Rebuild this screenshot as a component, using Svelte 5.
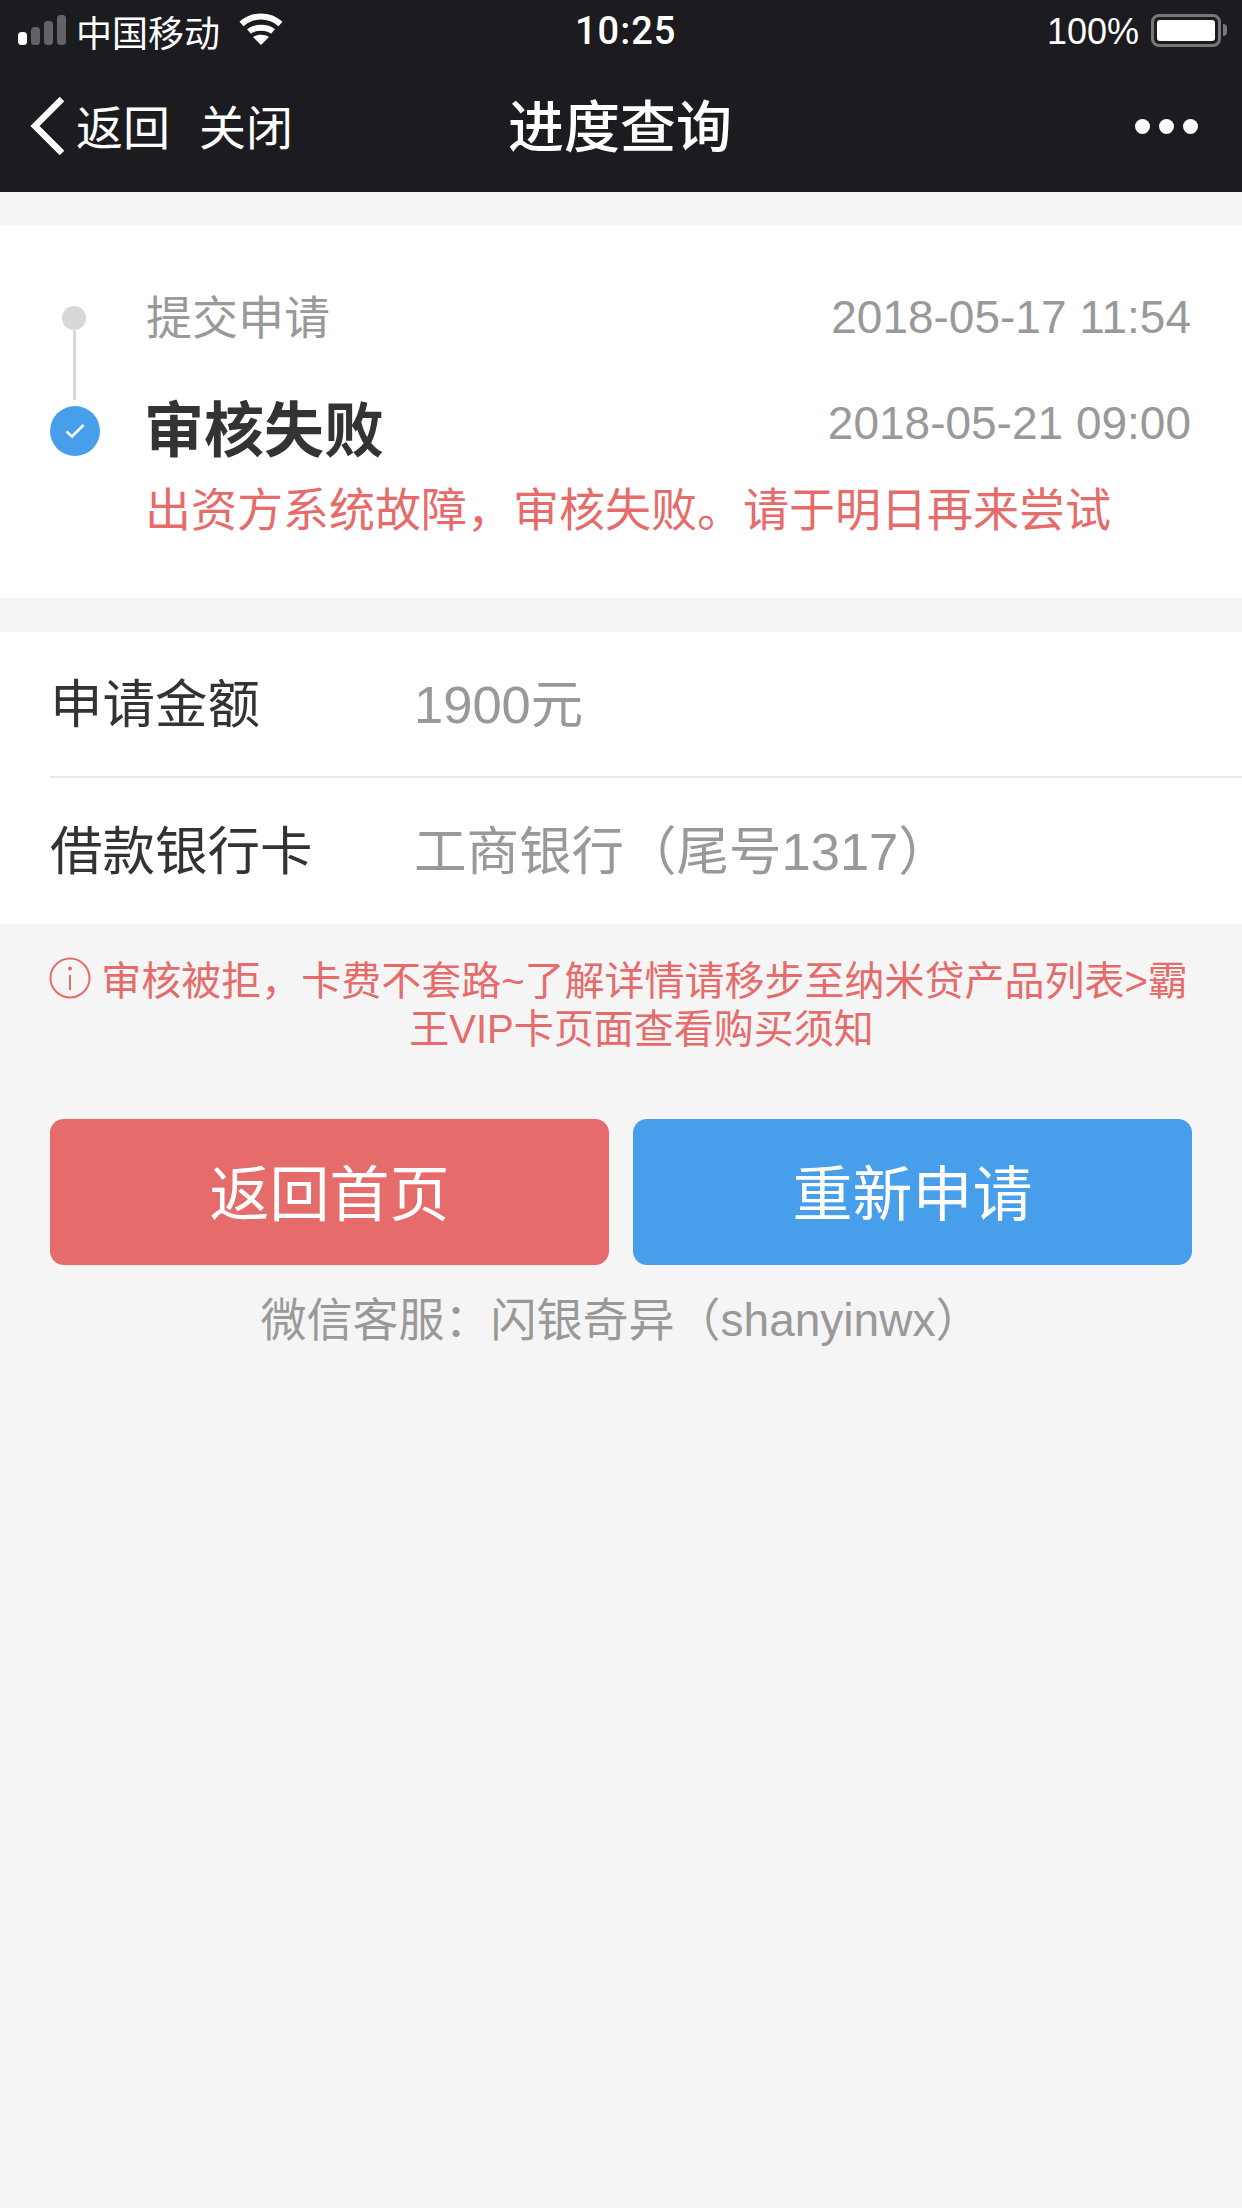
<script>
  const rows = [
    { label: '申请金额', value: '1900元' },
    { label: '借款银行卡', value: '工商银行（尾号1317）' }
  ];
</script>

<div class="page">
  <header class="head">
    <div class="status">
      <div class="left">
        <svg class="signal" width="50" height="30" viewBox="0 0 50 30">
          <rect x="0" y="17" width="9" height="13" rx="3.5" fill="#fff" />
          <rect x="13" y="12" width="9" height="18" rx="3.5" fill="#636366" />
          <rect x="26" y="6" width="9" height="24" rx="3.5" fill="#636366" />
          <rect x="39" y="0" width="9" height="30" rx="3.5" fill="#636366" />
        </svg>
        <span class="carrier">中国移动</span>
        <svg class="wifi" width="44" height="32" viewBox="0 0 44 32" fill="none" stroke="#fff" stroke-width="6">
          <path d="M2.500 11C13.500 1 30.500 1 41.500 11" />
          <path d="M10 18.500C16 13.500 28 13.500 34 18.500" />
          <path d="M22 32L14 24C18 21 26 21 30 24Z" fill="#fff" stroke="none" />
        </svg>
      </div>
      <div class="time">10:25</div>
      <div class="right">
        <span class="pct">100%</span>
        <span class="battery"><span class="level"></span></span>
        <span class="nub"></span>
      </div>
    </div>
    <nav class="nav">
      <div class="nav-left">
        <svg class="chev" width="36" height="60" viewBox="0 0 36 60" fill="none" stroke="#fff" stroke-width="6.500">
          <path d="M32 3L5 30L32 57" />
        </svg>
        <span class="back">返回</span>
        <span class="close">关闭</span>
      </div>
      <h1 class="title">进度查询</h1>
      <div class="more"><i></i><i></i><i></i></div>
    </nav>
  </header>

  <section class="card steps">
    <div class="rail">
      <span class="dot"></span>
      <span class="line"></span>
      <span class="tick">
        <svg width="20" height="16" viewBox="0 0 20 16" fill="none" stroke="#fff" stroke-width="2.600">
          <path d="M1.500 8.500L7 13.500L18.500 2" />
        </svg>
      </span>
    </div>
    <div class="step-body">
      <div class="step first">
        <span class="step-name">提交申请</span>
        <span class="date">2018-05-17 11:54</span>
      </div>
      <div class="step second">
        <span class="step-name strong">审核失败</span>
        <span class="date">2018-05-21 09:00</span>
      </div>
      <p class="reason">出资方系统故障，审核失败。请于明日再来尝试</p>
    </div>
  </section>

  <section class="card info">
    {#each rows as row}
      <div class="row">
        <span class="label">{row.label}</span>
        <span class="value">{row.value}</span>
      </div>
    {/each}
  </section>

  <div class="notice">
    <svg class="info-icon" width="42" height="42" viewBox="0 0 42 42" fill="none" stroke="#e56c6a">
      <circle cx="21" cy="21" r="19.500" stroke-width="2" />
      <path d="M21 18V33" stroke-width="2" />
      <circle cx="21" cy="11.500" r="2" fill="#e56c6a" stroke="none" />
    </svg>
    <p>审核被拒，卡费不套路~了解详情请移步至纳米贷产品列表&gt;霸王VIP卡页面查看购买须知</p>
  </div>

  <div class="actions">
    <button class="btn red">返回首页</button>
    <button class="btn blue">重新申请</button>
  </div>

  <p class="service">微信客服：闪银奇异（shanyinwx）</p>
</div>

<style>
  :global(body) {
    margin: 0;
    background: #f5f5f5;
  }
  .page {
    width: 1242px;
    height: 2208px;
    overflow: hidden;
    background: #f5f5f5;
    font-family: "Liberation Sans", "Noto Sans CJK SC", sans-serif;
    color: #999;
  }
  .head {
    height: 192px;
    background: #1b1b20;
    color: #fff;
    margin-bottom: 33px;
  }
  .status {
    height: 60px;
    display: flex;
    align-items: center;
    justify-content: space-between;
    font-size: 36px;
    position: relative;
  }
  .left {
    display: flex;
    align-items: center;
    padding-left: 18px;
  }
  .signal { margin-right: 8px; }
  .wifi { margin-left: 19px; margin-bottom: 2px; }
  .carrier { padding-top: 1px; }
  .time {
    position: absolute;
    left: 575px;
    top: 9px;
    font-family: Roboto, "Liberation Sans", sans-serif;
    font-weight: 500;
    font-size: 38px;
    letter-spacing: 1px;
  }
  .right {
    display: flex;
    align-items: center;
    padding-right: 15px;
  }
  .pct { margin-right: 12px; padding-top: 4px; }
  .battery {
    box-sizing: border-box;
    width: 70px;
    height: 33px;
    border: 3px solid #77777b;
    border-radius: 8px;
    padding: 3px;
    display: flex;
  }
  .level {
    flex: 1;
    background: #fff;
    border-radius: 3px;
  }
  .nub {
    width: 4px;
    height: 12px;
    margin-left: 2px;
    background: #77777b;
    border-radius: 0 4px 4px 0;
  }
  .nav {
    height: 132px;
    display: flex;
    align-items: center;
    justify-content: space-between;
    position: relative;
  }
  .nav-left {
    display: flex;
    align-items: center;
    padding-left: 30px;
    font-size: 47px;
  }
  .back { margin-left: 10px; padding-bottom: 3px; }
  .close { margin-left: 29px; padding-bottom: 3px; }
  .title {
    position: absolute;
    left: 508px;
    top: 22px;
    margin: 0;
    font-size: 56px;
    font-weight: 500;
  }
  .more {
    display: flex;
    gap: 9px;
    padding-right: 44px;
  }
  .more i {
    width: 15px;
    height: 15px;
    border-radius: 50%;
    background: #fff;
  }
  .card { background: #fff; }
  .steps {
    height: 373px;
    display: flex;
    margin-bottom: 34px;
  }
  .rail {
    width: 146px;
    flex: none;
    position: relative;
  }
  .dot {
    width: 24px;
    height: 24px;
    border-radius: 50%;
    background: #d8d8d8;
    position: absolute;
    left: 62px;
    top: 81px;
  }
  .line {
    width: 3px;
    height: 70px;
    background: #d8d8d8;
    position: absolute;
    left: 73px;
    top: 105px;
  }
  .tick {
    width: 50px;
    height: 50px;
    border-radius: 50%;
    background: #479fec;
    position: absolute;
    left: 50px;
    top: 181px;
    display: flex;
    align-items: center;
    justify-content: center;
  }
  .step-body {
    flex: 1;
    padding-right: 51px;
  }
  .step {
    display: flex;
    justify-content: space-between;
    align-items: center;
  }
  .first {
    height: 66px;
    margin-top: 56px;
  }
  .first .date { padding-top: 5px; }
  .second {
    height: 80px;
    margin-top: 36px;
  }
  .step-name { font-size: 46px; }
  .strong {
    font-size: 60px;
    font-weight: 700;
    color: #333;
    padding-top: 4px;
    margin-left: -2px;
  }
  .date { font-size: 46px; }
  .reason {
    margin: 12px 0 0 -1px;
    font-size: 46px;
    line-height: 70px;
    color: #e56c6a;
  }
  .info {
    height: 292px;
  }
  .row {
    height: 146px;
    margin-left: 50px;
    padding-bottom: 8px;
    display: flex;
    align-items: center;
    font-size: 52.500px;
    box-sizing: border-box;
  }
  .row:first-child {
    border-bottom: 2px solid #e8e8e8;
  }
  .label {
    width: 364px;
    color: #333;
  }
  .notice {
    display: flex;
    padding: 33px 52px 0 49px;
    gap: 2px;
    height: 195px;
    box-sizing: border-box;
    color: #e56c6a;
  }
  .info-icon {
    flex: none;
  }
  .notice p {
    margin: 0;
    flex: 1;
    font-size: 40px;
    line-height: 48px;
    text-align: center;
    text-indent: 6px;
  }
  .actions {
    display: flex;
    gap: 24px;
    padding: 0 50px;
  }
  .btn {
    flex: 1;
    height: 146px;
    border: 0;
    border-radius: 14px;
    padding: 0 0 5px;
    font: inherit;
    font-size: 60px;
    color: #fff;
  }
  .red { background: #e56c6a; }
  .blue { background: #479fec; }
  .service {
    margin: 23px 0 0;
    font-size: 46px;
    line-height: 64px;
    text-align: center;
  }
</style>
